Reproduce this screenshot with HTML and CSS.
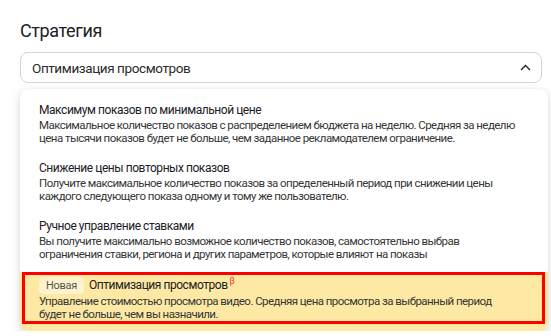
FILE: index.html
```html
<!DOCTYPE html>
<html>
<head>
    <meta charset="UTF-8">
    <link rel="stylesheet" href="styles.css">
</head>
<body>
    <div class="page">
        <h2 class="field-title">Стратегия</h2>

        <div class="select">
            <span class="select-value">Оптимизация просмотров</span>
            <svg class="chevron" width="11" height="7" viewBox="0 0 11 7">
                <path d="M1 6 5.5 1.5 10 6" fill="none" stroke="#222" stroke-width="1.4"/>
            </svg>
        </div>

        <ul class="menu">
            <li class="menu-item">
                <div class="item-title">Максимум показов по минимальной цене</div>
                <div class="item-desc">Максимальное количество показов с распределением бюджета на неделю. Средняя за неделю<br>цена тысячи показов будет не больше, чем заданное рекламодателем ограничение.</div>
            </li>
            <li class="menu-item">
                <div class="item-title">Снижение цены повторных показов</div>
                <div class="item-desc">Получите максимальное количество показов за определенный период при снижении цены<br>каждого следующего показа одному и тому же пользователю.</div>
            </li>
            <li class="menu-item">
                <div class="item-title">Ручное управление ставками</div>
                <div class="item-desc">Вы получите максимально возможное количество показов, самостоятельно выбрав<br>ограничения ставки, региона и других параметров, которые влияют на показы</div>
            </li>
            <li class="menu-item selected">
                <div class="item-title">
                    <span class="badge">Новая</span>
                    <span>Оптимизация просмотров</span>
                    <sup class="beta">β</sup>
                </div>
                <div class="item-desc">Управление стоимостью просмотра видео. Средняя цена просмотра за выбранный период<br>будет не больше, чем вы назначили.</div>
            </li>
        </ul>
    </div>
</body>
</html>
```

FILE: styles.css
```css
body {
    margin: 0;
    background: #fff;
    font-family: Roboto, "Noto Sans", Arial, sans-serif;
    color: #21201f;
}

.page {
    padding: 20px 0 0 20px;
}

.field-title {
    margin: 0 0 10px 0;
    font-size: 18px;
    line-height: 22px;
    font-weight: normal;
    letter-spacing: -0.4px;
    color: #21201f;
}

.select {
    display: flex;
    align-items: center;
    justify-content: space-between;
    width: 522px;
    height: 31px;
    padding: 0 10px 0 11px;
    border: 1px solid #d5d5d5;
    border-radius: 8px;
    box-sizing: border-box;
}

.select-value {
    font-size: 13.5px;
    letter-spacing: -0.4px;
    color: #2b2b2b;
}

.chevron {
    display: block;
}

.menu {
    list-style: none;
    margin: 6px 0 0 0;
    padding: 9px 0 0 0;
    width: 528px;
    background: #fff;
    border-radius: 8px;
    overflow: hidden;
    box-shadow: 0 3px 10px rgba(0, 0, 0, 0.16), 0 0 1px rgba(0, 0, 0, 0.12);
    box-sizing: border-box;
}

.menu-item {
    position: relative;
    padding: 4px 16px 11px 19px;
}

.item-title {
    display: flex;
    align-items: center;
    font-size: 12px;
    line-height: 17px;
    letter-spacing: -0.45px;
    color: #21201f;
}

.item-desc {
    font-size: 11.5px;
    line-height: 13px;
    letter-spacing: -0.55px;
    color: #363636;
    white-space: nowrap;
}

.selected {
    padding-bottom: 10px;
    background: #fde9a3;
}

.selected .item-title {
    min-height: 19px;
}

/* red annotation frame over the chosen option */
.selected::after {
    content: "";
    position: absolute;
    top: 0;
    left: 2px;
    right: 3px;
    bottom: 7px;
    border: 3px solid #f00;
    pointer-events: none;
}

.badge {
    display: inline-block;
    height: 17px;
    line-height: 17px;
    padding: 0 7px;
    margin-right: 5px;
    border-radius: 4px;
    background: rgba(255, 255, 255, 0.45);
    font-size: 11px;
    letter-spacing: -0.3px;
    color: #555;
}

.beta {
    align-self: flex-start;
    margin-left: 2px;
    font-size: 9px;
    line-height: 10px;
    color: #f33;
}
```
